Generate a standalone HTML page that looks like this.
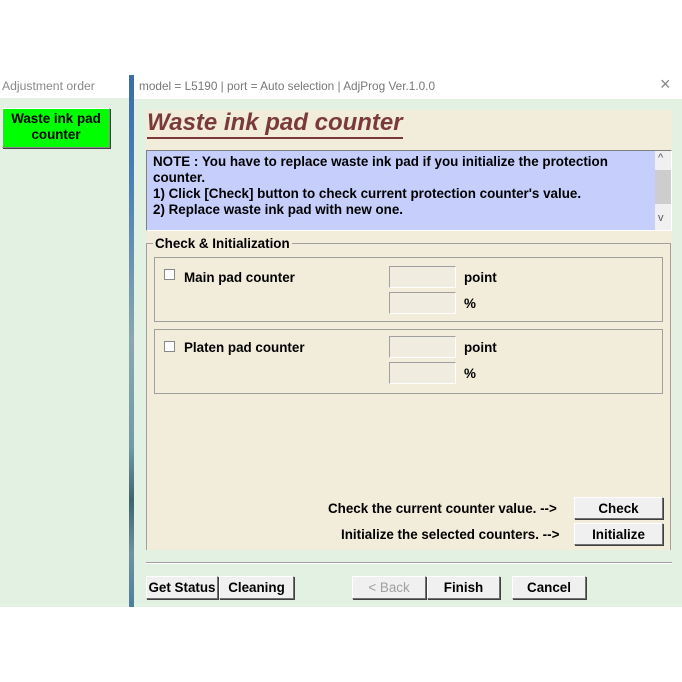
<!DOCTYPE html>
<html><head><style>
body{margin:0;width:682px;height:682px;background:#fff;position:relative;overflow:hidden;font-family:"Liberation Sans",Arial,sans-serif;}
.a{position:absolute}
.b{font-weight:bold;font-size:13.4px;color:#000}
.btn{position:absolute;background:#f0f0f0;border:1px solid;border-color:#fff #707070 #707070 #fff;box-shadow:1px 1px 0 #404040;font-weight:bold;font-size:13.4px;text-align:center;line-height:21px;box-sizing:border-box}
.tb{position:absolute;width:67px;height:22px;box-sizing:border-box;background:#f0ece0;border:1px solid;border-color:#a0a0a0 #fff #fff #a0a0a0}
.cb{position:absolute;width:11px;height:11px;background:#fff;border:1px solid #888;box-sizing:border-box}
</style></head><body>
<div class="a" style="left:2px;top:79px;font-size:12.2px;color:#888">Adjustment order</div>
<div class="a" style="left:0;top:98px;width:129px;height:509px;background:#e3f1e3"></div>
<div class="btn" style="left:2px;top:108px;width:108px;height:40px;background:#00ff00;line-height:16px;padding-top:2px;border-color:#fff #888 #888 #fff">Waste ink pad<br>counter</div>
<div class="a" style="left:129px;top:75px;width:5px;height:532px;background:linear-gradient(#3a6ea5,#4a80b5 20%,#8aa6b0 50%,#6f9aa8 70%,#3f6470 80%,#6d93a3 90%,#4c7f9c)"></div>
<div class="a" style="left:139px;top:79px;font-size:11.8px;color:#777">model = L5190 | port = Auto selection | AdjProg Ver.1.0.0</div>
<div class="a" style="left:660px;top:74px;font-size:18px;color:#888">×</div>
<div class="a" style="left:134px;top:99px;width:548px;height:508px;background:#e3f1e3"></div>
<div class="a" style="left:146px;top:110px;width:526px;height:440px;background:#f2ecdb"></div>
<div class="a" style="left:147px;top:109px;font-size:24px;font-weight:bold;font-style:italic;color:#7a3a3a">Waste ink pad counter</div>
<div class="a" style="left:147px;top:137px;width:256px;height:2px;background:#7a3a3a"></div>
<div class="a" style="left:146px;top:150px;width:526px;height:81px;box-sizing:border-box;background:#c6cefc;border:1px solid;border-color:#808080 #fff #fff #808080"></div>
<div class="a b" style="left:153px;top:154px;line-height:16px">NOTE : You have to replace waste ink pad if you initialize the protection<br>counter.<br>1) Click [Check] button to check current protection counter's value.<br>2) Replace waste ink pad with new one.</div>
<div class="a" style="left:655px;top:151px;width:16px;height:79px;background:#f0f0f0"></div>
<div class="a" style="left:655px;top:170px;width:16px;height:34px;background:#cdcdcd"></div>
<div class="a" style="left:658px;top:152px;font-size:11px;color:#555">^</div>
<div class="a" style="left:658px;top:212px;font-size:11px;color:#555">v</div>
<div class="a" style="left:146px;top:243px;width:525px;height:307px;box-sizing:border-box;border:1px solid #a0a0a0;border-bottom:none"></div>
<div class="a b" style="left:153px;top:236px;background:#f2ecdb;padding:0 2px">Check &amp; Initialization</div>
<div class="a" style="left:154px;top:257px;width:509px;height:65px;box-sizing:border-box;border:1px solid #a0a0a0"></div>
<div class="a" style="left:154px;top:329px;width:509px;height:65px;box-sizing:border-box;border:1px solid #a0a0a0"></div>
<div class="cb" style="left:164px;top:269px"></div>
<div class="a b" style="left:184px;top:270px">Main pad counter</div>
<div class="tb" style="left:389px;top:266px"></div><div class="tb" style="left:389px;top:292px"></div>
<div class="a b" style="left:464px;top:270px">point</div><div class="a b" style="left:464px;top:296px">%</div>
<div class="cb" style="left:164px;top:341px"></div>
<div class="a b" style="left:184px;top:340px">Platen pad counter</div>
<div class="tb" style="left:389px;top:336px"></div><div class="tb" style="left:389px;top:362px"></div>
<div class="a b" style="left:464px;top:340px">point</div><div class="a b" style="left:464px;top:366px">%</div>
<div class="a b" style="left:328px;top:501px">Check the current counter value. --&gt;</div>
<div class="a b" style="left:341px;top:527px">Initialize the selected counters. --&gt;</div>
<div class="btn" style="left:574px;top:497px;width:89px;height:22px">Check</div>
<div class="btn" style="left:574px;top:523px;width:89px;height:22px">Initialize</div>
<div class="a" style="left:146px;top:562px;width:526px;height:1px;background:#a0a0a0;border-bottom:1px solid #fff"></div>
<div class="btn" style="left:146px;top:576px;width:72px;height:23px">Get Status</div>
<div class="btn" style="left:219px;top:576px;width:75px;height:23px">Cleaning</div>
<div class="btn" style="left:352px;top:576px;width:74px;height:23px;color:#a0a0a0;font-weight:normal">&lt; Back</div>
<div class="btn" style="left:427px;top:576px;width:73px;height:23px">Finish</div>
<div class="btn" style="left:512px;top:576px;width:74px;height:23px">Cancel</div>
</body></html>
